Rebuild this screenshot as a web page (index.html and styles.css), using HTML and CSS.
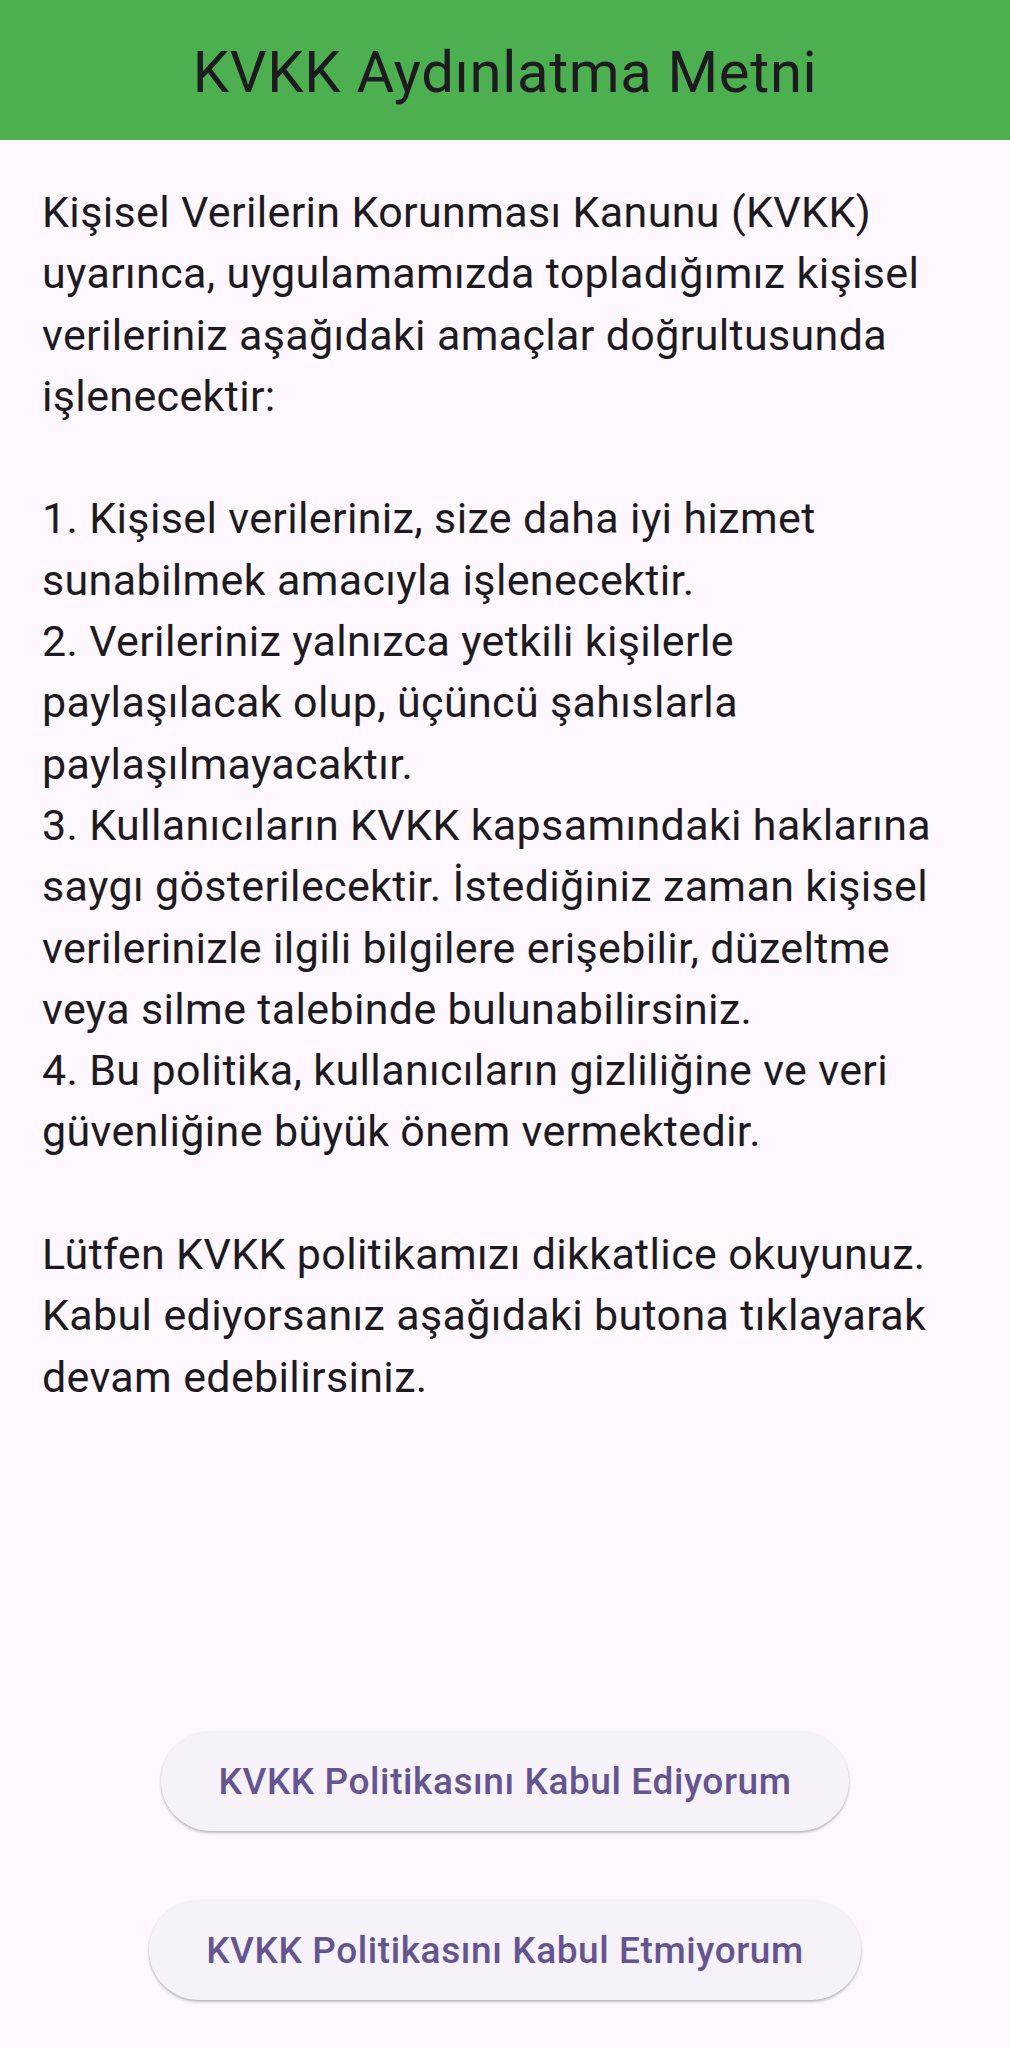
FILE: index.html
```html
<!DOCTYPE html>
<html lang="tr">
<head>
<meta charset="utf-8">
<title>KVKK Aydınlatma Metni</title>
<link rel="stylesheet" href="styles.css">
</head>
<body>
<div class="screen">
  <header class="appbar">
    <h1 class="appbar-title">KVKK Aydınlatma Metni</h1>
  </header>
  <main class="content">
    <p class="policy">Kişisel Verilerin Korunması Kanunu (KVKK) uyarınca, uygulamamızda topladığımız kişisel verileriniz aşağıdaki amaçlar doğrultusunda işlenecektir:

1. Kişisel verileriniz, size daha iyi hizmet sunabilmek amacıyla işlenecektir.
2. Verileriniz yalnızca yetkili kişilerle paylaşılacak olup, üçüncü şahıslarla paylaşılmayacaktır.
3. Kullanıcıların KVKK kapsamındaki haklarına saygı gösterilecektir. İstediğiniz zaman kişisel verilerinizle ilgili bilgilere erişebilir, düzeltme veya silme talebinde bulunabilirsiniz.
4. Bu politika, kullanıcıların gizliliğine ve veri güvenliğine büyük önem vermektedir.

Lütfen KVKK politikamızı dikkatlice okuyunuz. Kabul ediyorsanız aşağıdaki butona tıklayarak devam edebilirsiniz.</p>
  </main>
  <div class="actions">
    <button class="btn" type="button">KVKK Politikasını Kabul Ediyorum</button>
    <button class="btn" type="button">KVKK Politikasını Kabul Etmiyorum</button>
  </div>
</div>
</body>
</html>
```

FILE: styles.css
```css
html, body {
  margin: 0;
  padding: 0;
  background: #fef7ff;
}

.screen {
  min-height: 100vh;
  display: flex;
  flex-direction: column;
  font-family: Roboto, "Noto Sans", sans-serif;
  color: #1d1b20;
}

.appbar {
  height: 140px;
  background: #4caf50;
  display: flex;
  align-items: center;
  justify-content: center;
  padding-top: 4px;
  box-sizing: border-box;
}

.appbar-title {
  margin: 0;
  font-size: 58px;
  font-weight: 400;
  letter-spacing: 0.65px;
  color: #1d1b20;
  line-height: 1;
}

.content {
  flex: 1;
  padding: 42px 42px 0 42px;
}

.policy {
  margin: 0;
  font-size: 43px;
  letter-spacing: 0.35px;
  line-height: 61.3px;
  white-space: pre-line;
  color: #1d1b20;
}

.actions {
  display: flex;
  flex-direction: column;
  align-items: center;
  gap: 69px;
  padding-bottom: 48px;
}

.btn {
  height: 100px;
  padding: 0 57px;
  border: none;
  border-radius: 50px;
  background: #f7f2fa;
  color: #65558f;
  font-family: Roboto, "Noto Sans", sans-serif;
  font-size: 37px;
  font-weight: 500;
  letter-spacing: 0.58px;
  box-shadow: 0 2px 3px rgba(0, 0, 0, 0.22), 0 1px 2px rgba(0, 0, 0, 0.08);
}
```
